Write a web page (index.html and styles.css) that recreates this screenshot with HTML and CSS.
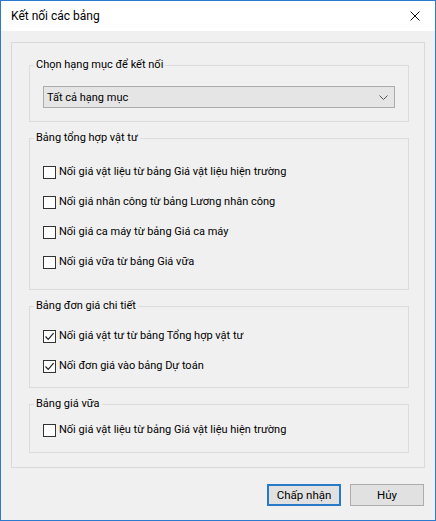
FILE: index.html
```html
<!DOCTYPE html>
<html>
<head lang="vi">
<meta charset="UTF-8">
<title>Kết nối các bảng</title>
<link rel="stylesheet" href="styles.css">
</head>
<body>
<div class="window">
    <div class="titlebar">
        <span class="title">Kết nối các bảng</span>
        <svg class="close" width="10" height="10" viewBox="0 0 10 10"><path d="M0.5 0.5L9.5 9.5M9.5 0.5L0.5 9.5" stroke="#111" stroke-width="1" fill="none"/></svg>
    </div>
    <div class="content">
        <div class="panel">
            <fieldset class="grp g1">
                <legend>Chọn hạng mục để kết nối</legend>
                <div class="combo">
                    <span>Tất cả hạng mục</span>
                    <svg width="9" height="5" viewBox="0 0 9 5"><path d="M0.5 0.5L4.5 4.5L8.5 0.5" stroke="#555" stroke-width="1" fill="none"/></svg>
                </div>
            </fieldset>
            <fieldset class="grp g2">
                <legend>Bảng tổng hợp vật tư</legend>
                <label class="row"><span class="box"></span>Nối giá vật liệu từ bảng Giá vật liệu hiện trường</label>
                <label class="row"><span class="box"></span>Nối giá nhân công từ bảng Lương nhân công</label>
                <label class="row"><span class="box"></span>Nối giá ca máy từ bảng Giá ca máy</label>
                <label class="row"><span class="box"></span>Nối giá vữa từ bảng Giá vữa</label>
            </fieldset>
            <fieldset class="grp g3">
                <legend>Bảng đơn giá chi tiết</legend>
                <label class="row"><span class="box"><svg width="11" height="11" viewBox="0 0 11 11"><path d="M1.5 5.5L4.2 8.3L9.6 2.2" stroke="#222" stroke-width="1.2" fill="none"/></svg></span>Nối giá vật tư từ bảng Tổng hợp vật tư</label>
                <label class="row"><span class="box"><svg width="11" height="11" viewBox="0 0 11 11"><path d="M1.5 5.5L4.2 8.3L9.6 2.2" stroke="#222" stroke-width="1.2" fill="none"/></svg></span>Nối đơn giá vào bảng Dự toán</label>
            </fieldset>
            <fieldset class="grp g4">
                <legend>Bảng giá vữa</legend>
                <label class="row"><span class="box"></span>Nối giá vật liệu từ bảng Giá vật liệu hiện trường</label>
            </fieldset>
        </div>
        <div class="buttons">
            <button class="btn default">Chấp nhận</button>
            <button class="btn">Hủy</button>
        </div>
    </div>
</div>
</body>
</html>
```

FILE: styles.css
```css
*{margin:0;padding:0;box-sizing:border-box;}
body{
	background:#fff;
	font-family:Roboto,"Noto Sans","Liberation Sans",sans-serif;
	font-size:11px;
	color:#000;
}
.window{
	width:436px;
	height:521px;
	border:1px solid #2b7ad0;
	background:#f0f0f0;
	display:flex;
	flex-direction:column;
}
.titlebar{
	height:30px;
	background:#fff;
	display:flex;
	align-items:center;
	justify-content:space-between;
	padding:0 10px 1px 10px;
}
.title{line-height:16px;font-size:12px;}
.close{margin-right:5px;}
.content{padding:11px 10px 0 10px;}
.panel{
	border:1px solid #d9d9d9;
	padding:14px 15px 14px 17px;
	display:flex;
	flex-direction:column;
	gap:8px;
}
.grp{
	border:1px solid #dcdcdc;
	padding:0 0 0 13px;
	min-width:0;
}
.grp legend{
	margin-left:-9px;
	padding:0 2px;
	line-height:16px;
}
.g1{padding-top:13px;padding-bottom:13px;padding-right:13px;}
.g2{padding-top:18px;padding-bottom:19px;}
.g3{padding-top:14px;padding-bottom:13px;}
.g4{padding-top:10px;padding-bottom:14px;}
.row{
	display:flex;
	align-items:center;
	height:16px;
	line-height:16px;
	margin-bottom:14px;
}
.row:last-child{margin-bottom:0;}
.box{
	width:13px;
	height:13px;
	border:1px solid #333;
	background:#fff;
	margin-right:3px;
	display:flex;
	align-items:center;
	justify-content:center;
}
.box svg{display:block;}
.combo{
	height:22px;
	border:1px solid #acacac;
	background:#e5e5e5;
	display:flex;
	align-items:center;
	justify-content:space-between;
	padding:0 6px 0 3px;
}
.buttons{
	display:flex;
	justify-content:flex-end;
	gap:9px;
	margin-top:16px;
	padding-right:1px;
}
.btn{
	width:74px;
	height:22px;
	border:1px solid #adadad;
	background:#e1e1e1;
	font-family:inherit;
	font-size:11.5px;
	color:#000;
}
.btn.default{border:2px solid #2a78c8;}
```
